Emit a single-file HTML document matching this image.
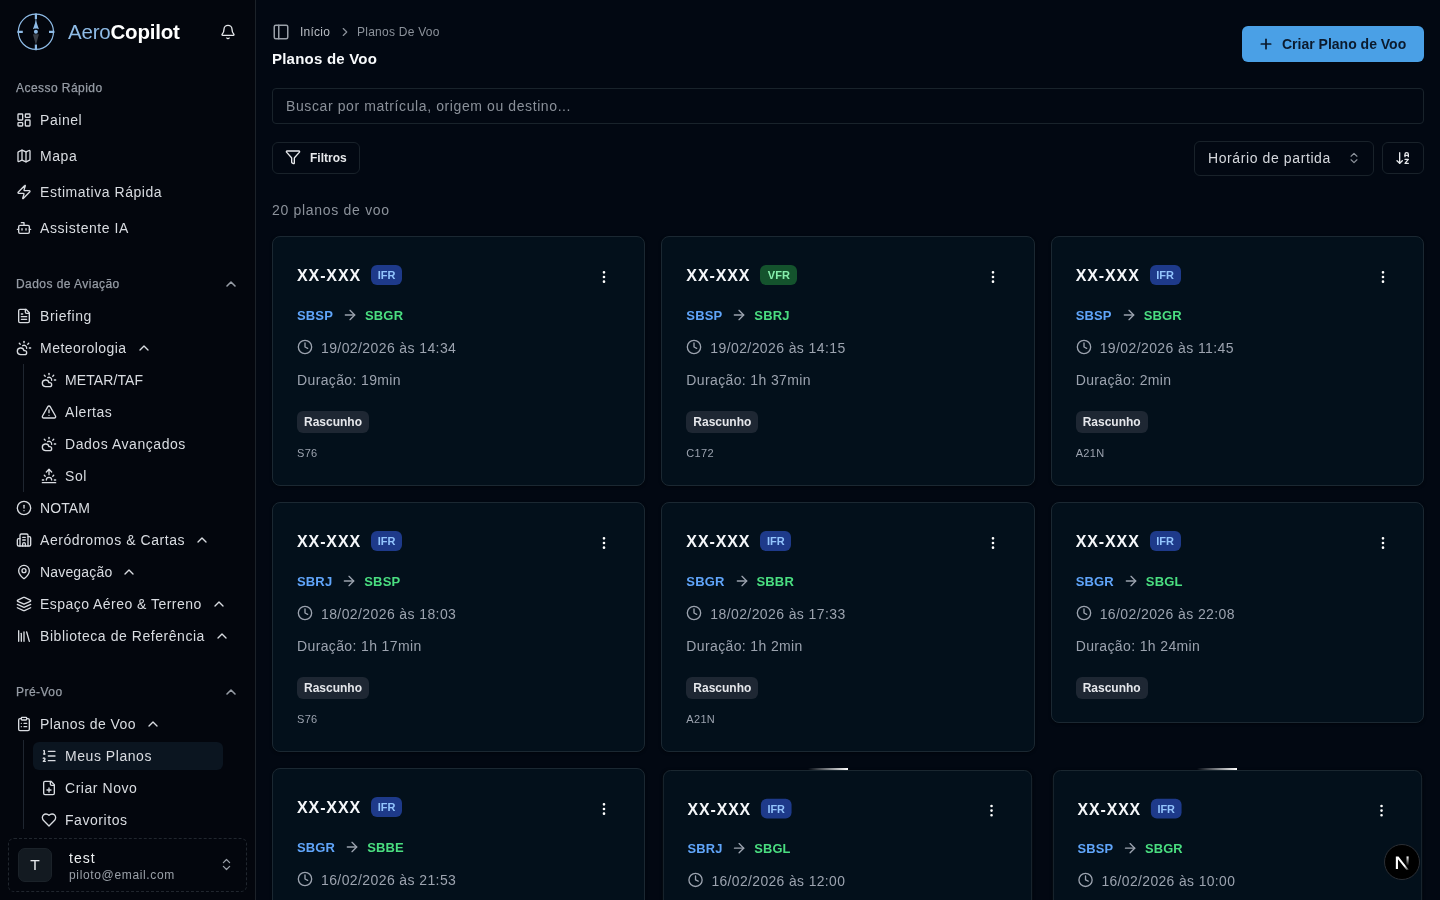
<!DOCTYPE html>
<html lang="pt-BR">
<head>
<meta charset="utf-8">
<title>AeroCopilot - Planos de Voo</title>
<style>
*{box-sizing:border-box;margin:0;padding:0}
html,body{width:1440px;height:900px;overflow:hidden}
body{background:#020812;font-family:"Liberation Sans",sans-serif;color:#e6e8eb;position:relative}
svg.i{width:16px;height:16px;fill:none;stroke:currentColor;stroke-width:2;stroke-linecap:round;stroke-linejoin:round;display:block}
#sb{position:absolute;left:0;top:0;width:256px;height:900px;background:#03060d;border-right:1px solid #1c2229}
.logo{position:absolute;left:16px;top:12px;width:40px;height:40px}
.brand{position:absolute;left:68px;top:19.5px;font-size:20.5px;letter-spacing:-0.2px;line-height:24px;white-space:nowrap}
.brand .a{color:#8ebbe6}
.brand .b{color:#fff;font-weight:700}
.bell{position:absolute;left:220px;top:24px;color:#e6e8eb}
.lbl{position:absolute;left:16px;height:20px;line-height:20px;font-size:12px;color:#969ca5;-webkit-text-stroke:0.25px #969ca5;letter-spacing:0.45px;white-space:nowrap}
svg.lchev{position:absolute;left:223px;color:#969ca5;stroke-width:2.4}
.it{position:absolute;left:16px;height:28px;display:flex;align-items:center;font-size:14px;letter-spacing:0.55px;color:#d9dce1;white-space:nowrap}
.it svg{margin-right:8px;color:#d9dce1}
.it svg.ch{margin-left:9px;margin-right:0;width:16px;height:16px}
.sub{left:41px}
.vline{position:absolute;left:23px;width:1px;background:#1f2630}
.active{position:absolute;left:33px;top:742px;width:190px;height:28px;background:#0b1520;border-radius:6px}
.user{position:absolute;left:8px;top:838px;width:239px;height:54px;border:1px dashed #20262e;border-radius:6px}
.avatar{position:absolute;left:9px;top:9px;width:34px;height:34px;border-radius:7px;background:#131a21;border:1px solid #1b2229;color:#e6e8eb;font-size:15.5px;text-align:center;line-height:32px}
.uname{position:absolute;left:60px;top:11px;font-size:14px;color:#eef0f2;letter-spacing:1px}
.umail{position:absolute;left:60px;top:29px;font-size:12px;color:#9aa0a8;letter-spacing:0.65px}
svg.uchev{position:absolute;left:209.5px;top:18px;width:15px;height:15px;color:#9aa0a8}

#main{position:absolute;left:256px;top:0;width:1184px;height:900px;will-change:transform}
#sb{will-change:transform}

svg.tog{position:absolute;left:16px;top:23px;width:18px;height:18px;color:#9aa0a8;stroke-width:2}
.bc1{position:absolute;left:44px;top:24px;font-size:12px;line-height:16px;letter-spacing:0.25px;color:#b9bdc3}
svg.bcch{position:absolute;left:81.5px;top:25px;width:14px;height:14px;color:#8c929b}
.bc2{position:absolute;left:101px;top:24px;font-size:12px;line-height:16px;letter-spacing:0.25px;color:#8c929b}
.title{position:absolute;left:16px;top:50px;font-size:15px;line-height:18px;font-weight:700;letter-spacing:0.22px;color:#f8fafc}
.cta{position:absolute;left:986px;top:26px;width:182px;height:36px;border-radius:6px;background:#4aa0e6;color:#0b1a2d;font-size:14px;font-weight:700;display:flex;align-items:center;padding-left:16px}
.cta svg{width:16px;height:16px;margin-right:8px;stroke-width:2.6}
.search{position:absolute;left:16px;top:88px;width:1152px;height:36px;border:1px solid #19232b;border-radius:4px;font-size:14px;letter-spacing:0.6px;color:#8a9099;padding-left:13px;line-height:34px}
.filt{position:absolute;left:16px;top:142px;width:88px;height:32px;border:1px solid #19222a;border-radius:6px;font-size:12px;font-weight:700;color:#e6e8eb;display:flex;align-items:center;padding-left:12px}
.filt svg{width:16px;height:16px;margin-right:9px;position:relative;top:-0.8px}
.sel{position:absolute;left:938px;top:141px;width:180px;height:35px;border:1px solid #19222a;border-radius:6px;font-size:14px;letter-spacing:0.6px;color:#d5d8dd;padding-left:13px;line-height:33px}
.sel svg{position:absolute;left:152px;top:9px;width:14px;height:14px;color:#8c929b}
.sort{position:absolute;left:1126px;top:142px;width:42px;height:32px;border:1px solid #19222a;border-radius:6px;color:#e6e8eb}
.sort svg{position:absolute;left:12px;top:7px}
.count{position:absolute;left:16px;top:202px;font-size:14px;line-height:16px;letter-spacing:0.7px;color:#8c929b}
.card{position:absolute;width:373.33px;background:#03101b;border:1px solid #1b2832;border-radius:8px;box-shadow:0 1px 3px rgba(0,0,0,.4)}
.card .reg{position:absolute;left:24px;top:29px;font-size:16px;line-height:20px;font-weight:700;letter-spacing:0.9px;color:#f5f7fa}
.badge{position:absolute;left:98px;top:27.6px;width:31px;height:20px;border-radius:6px;font-size:11px;font-weight:700;text-align:center;line-height:20px}
.badge.ifr{background:#1e3a8a;color:#93c5fd}
.badge.vfr{background:#14532d;color:#86efac;width:37px}
.card .dots{position:absolute;left:323px;top:32px;color:#fff}
.route{position:absolute;left:24px;top:69px;height:18px;display:flex;align-items:center;font-size:13px;font-weight:700;letter-spacing:0.15px}
.route .o{color:#60a5fa}
.route .d{color:#4ade80}
.route .arr{margin:0 7px 0 9px;color:#9ca3af}
.card .clk{position:absolute;left:24px;top:102px;color:#9ca3af}
.dt{position:absolute;left:48px;top:102px;font-size:14px;line-height:18px;letter-spacing:0.4px;color:#9ca3af}
.dur{position:absolute;left:24px;top:134px;font-size:14px;line-height:18px;letter-spacing:0.37px;color:#9ca3af}
.st{position:absolute;left:24px;top:174px;width:72px;height:22px;border-radius:6px;background:#1e2733;color:#e5e7eb;font-size:12px;font-weight:700;text-align:center;line-height:22px}
.ac{position:absolute;left:24px;top:208px;font-size:11px;line-height:16px;letter-spacing:0.3px;color:#9ca3af}
.anim{transform:scale(0.99);transform-origin:50% 0;margin-top:1.5px}
.shine{position:absolute;top:768px;width:40px;height:2px;background:linear-gradient(90deg,rgba(255,255,255,0),#fff)}
.nbtn{position:absolute;left:1128px;top:844px;width:36px;height:36px}
</style>
</head>
<body>
<div id="sb">
  <svg class="logo" viewBox="0 0 40 40">
    <circle cx="19.9" cy="19.8" r="17.6" fill="none" stroke="#8ebbe6" stroke-width="1.2"/>
    <path d="M19.9 1.4v5.6M19.9 32.6v5.6M1.4 19.8h5.4M33 19.8h5.4" stroke="#8ebbe6" stroke-width="2.2"/>
    <path d="M19.9 7v10" stroke="#8ebbe6" stroke-width="0.8"/>
    <path d="M19.9 8.5l3 8.8l-3 -1.2l-3 1.2z" fill="#8ebbe6"/>
    <path d="M19.9 33l3-10.8h-6z" fill="#3b4048"/>
    <circle cx="19.9" cy="19.8" r="2" fill="#8ebbe6"/>
  </svg>
  <div class="brand"><span class="a">Aero</span><span class="b">Copilot</span></div>
  <svg class="i bell" viewBox="0 0 24 24"><path d="M10.268 21a2 2 0 0 0 3.464 0"/><path d="M3.262 15.326A1 1 0 0 0 4 17h16a1 1 0 0 0 .74-1.673C19.41 13.956 18 12.499 18 8A6 6 0 0 0 6 8c0 4.499-1.411 5.956-2.738 7.326"/></svg>

  <div class="lbl" style="top:78px">Acesso Rápido</div>
  <div class="it" style="top:106px"><svg class="i" viewBox="0 0 24 24"><rect width="7" height="9" x="3" y="3" rx="1"/><rect width="7" height="5" x="14" y="3" rx="1"/><rect width="7" height="9" x="14" y="12" rx="1"/><rect width="7" height="5" x="3" y="16" rx="1"/></svg>Painel</div>
  <div class="it" style="top:142px"><svg class="i" viewBox="0 0 24 24"><path d="M14.106 5.553a2 2 0 0 0 1.788 0l3.659-1.83A1 1 0 0 1 21 4.619v12.764a1 1 0 0 1-.553.894l-4.553 2.277a2 2 0 0 1-1.788 0l-4.212-2.106a2 2 0 0 0-1.788 0l-3.659 1.83A1 1 0 0 1 3 19.381V6.618a1 1 0 0 1 .553-.894l4.553-2.277a2 2 0 0 1 1.788 0z"/><path d="M15 5.764v15"/><path d="M9 3.236v15"/></svg>Mapa</div>
  <div class="it" style="top:178px"><svg class="i" viewBox="0 0 24 24"><path d="M4 14a1 1 0 0 1-.78-1.63l9.9-10.2a.5.5 0 0 1 .86.46l-1.92 6.02A1 1 0 0 0 13 10h7a1 1 0 0 1 .78 1.63l-9.9 10.2a.5.5 0 0 1-.86-.46l1.92-6.02A1 1 0 0 0 11 14z"/></svg>Estimativa Rápida</div>
  <div class="it" style="top:214px"><svg class="i" viewBox="0 0 24 24"><path d="M12 8V4H8"/><rect width="16" height="12" x="4" y="8" rx="2"/><path d="M2 14h2"/><path d="M20 14h2"/><path d="M15 13v2"/><path d="M9 13v2"/></svg>Assistente IA</div>

  <div class="lbl" style="top:274px">Dados de Aviação</div>
  <svg class="i lchev" style="top:276px" viewBox="0 0 24 24"><path d="m18 15-6-6-6 6"/></svg>
  <div class="it" style="top:302px"><svg class="i" viewBox="0 0 24 24"><path d="M15 2H6a2 2 0 0 0-2 2v16a2 2 0 0 0 2 2h12a2 2 0 0 0 2-2V7Z"/><path d="M14 2v4a2 2 0 0 0 2 2h4"/><path d="M10 9H8"/><path d="M16 13H8"/><path d="M16 17H8"/></svg>Briefing</div>
  <div class="it" style="top:334px"><svg class="i" viewBox="0 0 24 24"><path d="M12 2v2"/><path d="m4.93 4.93 1.41 1.41"/><path d="M20 12h2"/><path d="m19.07 4.93-1.41 1.41"/><path d="M15.947 12.65a4 4 0 0 0-5.925-4.128"/><path d="M13 22H7a5 5 0 1 1 4.9-6H13a3 3 0 0 1 0 6Z"/></svg><span style="letter-spacing:0.47px">Meteorologia</span><svg class="i ch" viewBox="0 0 24 24"><path d="m18 15-6-6-6 6"/></svg></div>
  <div class="vline" style="top:364px;height:128px"></div>
  <div class="it sub" style="top:366px"><svg class="i" viewBox="0 0 24 24"><path d="M12 2v2"/><path d="m4.93 4.93 1.41 1.41"/><path d="M20 12h2"/><path d="m19.07 4.93-1.41 1.41"/><path d="M15.947 12.65a4 4 0 0 0-5.925-4.128"/><path d="M13 22H7a5 5 0 1 1 4.9-6H13a3 3 0 0 1 0 6Z"/></svg><span style="letter-spacing:0.1px">METAR/TAF</span></div>
  <div class="it sub" style="top:398px"><svg class="i" viewBox="0 0 24 24"><path d="m21.73 18-8-14a2 2 0 0 0-3.48 0l-8 14A2 2 0 0 0 4 21h16a2 2 0 0 0 1.73-3"/><path d="M12 9v4"/><path d="M12 17h.01"/></svg>Alertas</div>
  <div class="it sub" style="top:430px"><svg class="i" viewBox="0 0 24 24"><path d="M12 2v2"/><path d="m4.93 4.93 1.41 1.41"/><path d="M20 12h2"/><path d="m19.07 4.93-1.41 1.41"/><path d="M15.947 12.65a4 4 0 0 0-5.925-4.128"/><path d="M13 22H7a5 5 0 1 1 4.9-6H13a3 3 0 0 1 0 6Z"/></svg>Dados Avançados</div>
  <div class="it sub" style="top:462px"><svg class="i" viewBox="0 0 24 24"><path d="M12 2v8"/><path d="m4.93 10.93 1.41 1.41"/><path d="M2 18h2"/><path d="M20 18h2"/><path d="m19.07 10.93-1.41 1.41"/><path d="M22 22H2"/><path d="m8 6 4-4 4 4"/><path d="M16 18a4 4 0 0 0-8 0"/></svg>Sol</div>
  <div class="it" style="top:494px"><svg class="i" viewBox="0 0 24 24"><circle cx="12" cy="12" r="10"/><line x1="12" x2="12" y1="8" y2="12"/><line x1="12" x2="12.01" y1="16" y2="16"/></svg><span style="letter-spacing:0.1px">NOTAM</span></div>
  <div class="it" style="top:526px"><svg class="i" viewBox="0 0 24 24"><path d="M10 12h4"/><path d="M10 8h4"/><path d="M14 21v-3a2 2 0 0 0-4 0v3"/><path d="M6 10H4a2 2 0 0 0-2 2v7a2 2 0 0 0 2 2h16a2 2 0 0 0 2-2V9a2 2 0 0 0-2-2h-2"/><path d="M6 21V5a2 2 0 0 1 2-2h8a2 2 0 0 1 2 2v16"/></svg>Aeródromos &amp; Cartas<svg class="i ch" viewBox="0 0 24 24"><path d="m18 15-6-6-6 6"/></svg></div>
  <div class="it" style="top:558px"><svg class="i" viewBox="0 0 24 24"><path d="M20 10c0 4.993-5.539 10.193-7.399 11.799a1 1 0 0 1-1.202 0C9.539 20.193 4 14.993 4 10a8 8 0 0 1 16 0"/><circle cx="12" cy="10" r="3"/></svg><span style="letter-spacing:0.17px">Navegação</span><svg class="i ch" viewBox="0 0 24 24"><path d="m18 15-6-6-6 6"/></svg></div>
  <div class="it" style="top:590px"><svg class="i" viewBox="0 0 24 24"><path d="m12.83 2.18a2 2 0 0 0-1.66 0L2.6 6.08a1 1 0 0 0 0 1.83l8.58 3.91a2 2 0 0 0 1.66 0l8.58-3.9a1 1 0 0 0 0-1.83Z"/><path d="m22 17.65-9.17 4.16a2 2 0 0 1-1.66 0L2 17.65"/><path d="m22 12.65-9.17 4.16a2 2 0 0 1-1.66 0L2 12.65"/></svg><span style="letter-spacing:0.46px">Espaço Aéreo &amp; Terreno</span><svg class="i ch" viewBox="0 0 24 24"><path d="m18 15-6-6-6 6"/></svg></div>
  <div class="it" style="top:622px"><svg class="i" viewBox="0 0 24 24"><path d="m16 6 4 14"/><path d="M12 6v14"/><path d="M8 8v12"/><path d="M4 4v16"/></svg>Biblioteca de Referência<svg class="i ch" viewBox="0 0 24 24"><path d="m18 15-6-6-6 6"/></svg></div>

  <div class="lbl" style="top:682px">Pré-Voo</div>
  <svg class="i lchev" style="top:684px" viewBox="0 0 24 24"><path d="m18 15-6-6-6 6"/></svg>
  <div class="it" style="top:710px"><svg class="i" viewBox="0 0 24 24"><rect width="8" height="4" x="8" y="2" rx="1" ry="1"/><path d="M16 4h2a2 2 0 0 1 2 2v14a2 2 0 0 1-2 2H6a2 2 0 0 1-2-2V6a2 2 0 0 1 2-2h2"/><path d="M12 11h4"/><path d="M12 16h4"/><path d="M8 11h.01"/><path d="M8 16h.01"/></svg><span style="letter-spacing:0.44px">Planos de Voo</span><svg class="i ch" viewBox="0 0 24 24"><path d="m18 15-6-6-6 6"/></svg></div>
  <div class="vline" style="top:740px;height:89px"></div>
  <div class="active"></div>
  <div class="it sub" style="top:742px"><svg class="i" viewBox="0 0 24 24"><path d="M11 5h10"/><path d="M11 12h10"/><path d="M11 19h10"/><path d="M4 4h1v5"/><path d="M4 9h2"/><path d="M6.5 20H3.4c0-1 2.6-1.9 2.6-3.5a1.5 1.5 0 0 0-2.6-1.02"/></svg>Meus Planos</div>
  <div class="it sub" style="top:774px"><svg class="i" viewBox="0 0 24 24"><path d="M15 2H6a2 2 0 0 0-2 2v16a2 2 0 0 0 2 2h12a2 2 0 0 0 2-2V7Z"/><path d="M14 2v4a2 2 0 0 0 2 2h4"/><path d="M9 15h6"/><path d="M12 18v-6"/></svg>Criar Novo</div>
  <div class="it sub" style="top:806px"><svg class="i" viewBox="0 0 24 24"><path d="M19 14c1.49-1.46 3-3.21 3-5.5A5.5 5.5 0 0 0 16.5 3c-1.76 0-3 .5-4.5 2-1.5-1.5-2.74-2-4.5-2A5.5 5.5 0 0 0 2 8.5c0 2.3 1.5 4.05 3 5.5l7 7Z"/></svg>Favoritos</div>

  <div class="user">
    <div class="avatar">T</div>
    <div class="uname">test</div>
    <div class="umail">piloto@email.com</div>
    <svg class="i uchev" viewBox="0 0 24 24"><path d="m7 15 5 5 5-5"/><path d="m7 9 5-5 5 5"/></svg>
  </div>
</div>

<div id="main">
<svg class="i tog" viewBox="0 0 24 24"><rect width="18" height="18" x="3" y="3" rx="2"/><path d="M9 3v18"/></svg>
<div class="bc1">Início</div>
<svg class="i bcch" viewBox="0 0 24 24"><path d="m9 18 6-6-6-6"/></svg>
<div class="bc2">Planos De Voo</div>
<div class="title">Planos de Voo</div>
<div class="cta"><svg class="i" viewBox="0 0 24 24"><path d="M5 12h14"/><path d="M12 5v14"/></svg>Criar Plano de Voo</div>
<div class="search">Buscar por matrícula, origem ou destino...</div>
<div class="filt"><svg class="i" viewBox="0 0 24 24"><path d="M10 20a1 1 0 0 0 .553.895l2 1A1 1 0 0 0 14 21v-7a2 2 0 0 1 .517-1.341L21.74 4.67A1 1 0 0 0 21 3H3a1 1 0 0 0-.742 1.67l7.225 7.989A2 2 0 0 1 10 14z"/></svg>Filtros</div>
<div class="sel">Horário de partida<svg class="i" viewBox="0 0 24 24"><path d="m7 15 5 5 5-5"/><path d="m7 9 5-5 5 5"/></svg></div>
<div class="sort"><svg class="i" viewBox="0 0 24 24"><path d="m3 16 4 4 4-4"/><path d="M7 20V4"/><path d="M20 8h-5"/><path d="M15 10V6.5a2.5 2.5 0 0 1 5 0V10"/><path d="M15 14h5l-5 6h5"/></svg></div>
<div class="count">20 planos de voo</div>
<div class="card" style="left:16px;top:236px;height:250px"><div class="reg">XX-XXX</div><div class="badge ifr">IFR</div><svg class="i dots" viewBox="0 0 24 24"><circle cx="12" cy="12" r="1"/><circle cx="12" cy="5" r="1"/><circle cx="12" cy="19" r="1"/></svg><div class="route"><span class="o">SBSP</span><svg class="i arr" viewBox="0 0 24 24"><path d="M5 12h14"/><path d="m12 5 7 7-7 7"/></svg><span class="d">SBGR</span></div><svg class="i clk" viewBox="0 0 24 24"><circle cx="12" cy="12" r="10"/><polyline points="12 6 12 12 16 14"/></svg><div class="dt">19/02/2026 às 14:34</div><div class="dur">Duração: 19min</div><div class="st">Rascunho</div><div class="ac">S76</div></div>
<div class="card" style="left:405.33000000000004px;top:236px;height:250px"><div class="reg">XX-XXX</div><div class="badge vfr">VFR</div><svg class="i dots" viewBox="0 0 24 24"><circle cx="12" cy="12" r="1"/><circle cx="12" cy="5" r="1"/><circle cx="12" cy="19" r="1"/></svg><div class="route"><span class="o">SBSP</span><svg class="i arr" viewBox="0 0 24 24"><path d="M5 12h14"/><path d="m12 5 7 7-7 7"/></svg><span class="d">SBRJ</span></div><svg class="i clk" viewBox="0 0 24 24"><circle cx="12" cy="12" r="10"/><polyline points="12 6 12 12 16 14"/></svg><div class="dt">19/02/2026 às 14:15</div><div class="dur">Duração: 1h 37min</div><div class="st">Rascunho</div><div class="ac">C172</div></div>
<div class="card" style="left:794.6700000000001px;top:236px;height:250px"><div class="reg">XX-XXX</div><div class="badge ifr">IFR</div><svg class="i dots" viewBox="0 0 24 24"><circle cx="12" cy="12" r="1"/><circle cx="12" cy="5" r="1"/><circle cx="12" cy="19" r="1"/></svg><div class="route"><span class="o">SBSP</span><svg class="i arr" viewBox="0 0 24 24"><path d="M5 12h14"/><path d="m12 5 7 7-7 7"/></svg><span class="d">SBGR</span></div><svg class="i clk" viewBox="0 0 24 24"><circle cx="12" cy="12" r="10"/><polyline points="12 6 12 12 16 14"/></svg><div class="dt">19/02/2026 às 11:45</div><div class="dur">Duração: 2min</div><div class="st">Rascunho</div><div class="ac">A21N</div></div>
<div class="card" style="left:16px;top:502px;height:250px"><div class="reg">XX-XXX</div><div class="badge ifr">IFR</div><svg class="i dots" viewBox="0 0 24 24"><circle cx="12" cy="12" r="1"/><circle cx="12" cy="5" r="1"/><circle cx="12" cy="19" r="1"/></svg><div class="route"><span class="o">SBRJ</span><svg class="i arr" viewBox="0 0 24 24"><path d="M5 12h14"/><path d="m12 5 7 7-7 7"/></svg><span class="d">SBSP</span></div><svg class="i clk" viewBox="0 0 24 24"><circle cx="12" cy="12" r="10"/><polyline points="12 6 12 12 16 14"/></svg><div class="dt">18/02/2026 às 18:03</div><div class="dur">Duração: 1h 17min</div><div class="st">Rascunho</div><div class="ac">S76</div></div>
<div class="card" style="left:405.33000000000004px;top:502px;height:250px"><div class="reg">XX-XXX</div><div class="badge ifr">IFR</div><svg class="i dots" viewBox="0 0 24 24"><circle cx="12" cy="12" r="1"/><circle cx="12" cy="5" r="1"/><circle cx="12" cy="19" r="1"/></svg><div class="route"><span class="o">SBGR</span><svg class="i arr" viewBox="0 0 24 24"><path d="M5 12h14"/><path d="m12 5 7 7-7 7"/></svg><span class="d">SBBR</span></div><svg class="i clk" viewBox="0 0 24 24"><circle cx="12" cy="12" r="10"/><polyline points="12 6 12 12 16 14"/></svg><div class="dt">18/02/2026 às 17:33</div><div class="dur">Duração: 1h 2min</div><div class="st">Rascunho</div><div class="ac">A21N</div></div>
<div class="card" style="left:794.6700000000001px;top:502px;height:221px"><div class="reg">XX-XXX</div><div class="badge ifr">IFR</div><svg class="i dots" viewBox="0 0 24 24"><circle cx="12" cy="12" r="1"/><circle cx="12" cy="5" r="1"/><circle cx="12" cy="19" r="1"/></svg><div class="route"><span class="o">SBGR</span><svg class="i arr" viewBox="0 0 24 24"><path d="M5 12h14"/><path d="m12 5 7 7-7 7"/></svg><span class="d">SBGL</span></div><svg class="i clk" viewBox="0 0 24 24"><circle cx="12" cy="12" r="10"/><polyline points="12 6 12 12 16 14"/></svg><div class="dt">16/02/2026 às 22:08</div><div class="dur">Duração: 1h 24min</div><div class="st">Rascunho</div></div>
<div class="card" style="left:16px;top:768px;height:250px"><div class="reg">XX-XXX</div><div class="badge ifr">IFR</div><svg class="i dots" viewBox="0 0 24 24"><circle cx="12" cy="12" r="1"/><circle cx="12" cy="5" r="1"/><circle cx="12" cy="19" r="1"/></svg><div class="route"><span class="o">SBGR</span><svg class="i arr" viewBox="0 0 24 24"><path d="M5 12h14"/><path d="m12 5 7 7-7 7"/></svg><span class="d">SBBE</span></div><svg class="i clk" viewBox="0 0 24 24"><circle cx="12" cy="12" r="10"/><polyline points="12 6 12 12 16 14"/></svg><div class="dt">16/02/2026 às 21:53</div><div class="dur">Duração: 1h 10min</div><div class="st">Rascunho</div><div class="ac">S76</div></div>
<div class="card anim" style="left:405.33000000000004px;top:768px;height:250px"><div class="reg">XX-XXX</div><div class="badge ifr">IFR</div><svg class="i dots" viewBox="0 0 24 24"><circle cx="12" cy="12" r="1"/><circle cx="12" cy="5" r="1"/><circle cx="12" cy="19" r="1"/></svg><div class="route"><span class="o">SBRJ</span><svg class="i arr" viewBox="0 0 24 24"><path d="M5 12h14"/><path d="m12 5 7 7-7 7"/></svg><span class="d">SBGL</span></div><svg class="i clk" viewBox="0 0 24 24"><circle cx="12" cy="12" r="10"/><polyline points="12 6 12 12 16 14"/></svg><div class="dt">16/02/2026 às 12:00</div><div class="dur">Duração: 50min</div><div class="st">Rascunho</div><div class="ac">S76</div></div>
<div class="card anim" style="left:794.6700000000001px;top:768px;height:250px"><div class="reg">XX-XXX</div><div class="badge ifr">IFR</div><svg class="i dots" viewBox="0 0 24 24"><circle cx="12" cy="12" r="1"/><circle cx="12" cy="5" r="1"/><circle cx="12" cy="19" r="1"/></svg><div class="route"><span class="o">SBSP</span><svg class="i arr" viewBox="0 0 24 24"><path d="M5 12h14"/><path d="m12 5 7 7-7 7"/></svg><span class="d">SBGR</span></div><svg class="i clk" viewBox="0 0 24 24"><circle cx="12" cy="12" r="10"/><polyline points="12 6 12 12 16 14"/></svg><div class="dt">16/02/2026 às 10:00</div><div class="dur">Duração: 20min</div><div class="st">Rascunho</div><div class="ac">S76</div></div>

<div class="shine" style="left:552px"></div><div class="shine" style="left:941px"></div>
<svg class="nbtn" viewBox="0 0 36 36"><circle cx="18" cy="18" r="17.5" fill="#000" stroke="#2b2f35" stroke-width="1"/><g transform="translate(2.4 3) scale(0.175)"><path d="M54 54H69.142L128 130H114L66.1136 69.3836V125.97H54Z" fill="url(#ng0)"/><rect x="115" y="54" width="12" height="72" fill="url(#ng1)"/></g><defs><linearGradient id="ng0" x1="105" y1="105" x2="135" y2="140" gradientUnits="userSpaceOnUse"><stop stop-color="#fff"/><stop offset="1" stop-color="#fff" stop-opacity="0"/></linearGradient><linearGradient id="ng1" x1="121" y1="54" x2="120.799" y2="106.875" gradientUnits="userSpaceOnUse"><stop stop-color="#fff"/><stop offset="1" stop-color="#fff" stop-opacity="0"/></linearGradient></defs></svg>
</div>
</body>
</html>
